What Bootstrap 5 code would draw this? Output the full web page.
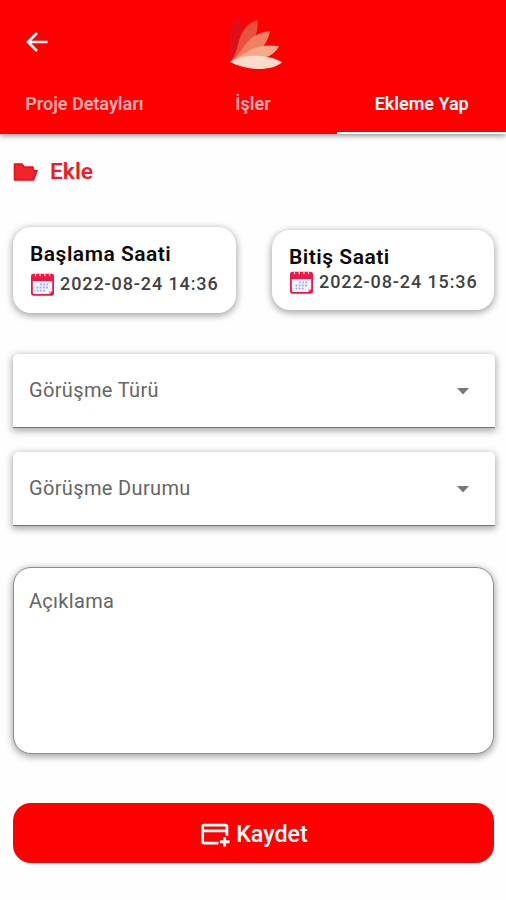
<!DOCTYPE html>
<html lang="tr">
<head>
<meta charset="utf-8">
<meta name="viewport" content="width=device-width, initial-scale=1">
<title>Ekleme Yap</title>
<link href="https://cdn.jsdelivr.net/npm/bootstrap@5.3.0/dist/css/bootstrap.min.css" rel="stylesheet">
<style>
body{font-family:Roboto,"Noto Sans",sans-serif;background:#fefefe;height:900px;overflow:hidden}
svg{display:block;flex:none}
.app-head{background:#f00;height:134px;box-shadow:0 2px 5px rgba(0,0,0,.4)}
.app-bar{height:76px}
.back-btn{margin:32px 0 0 26px}
.brand-logo{margin:16px 0 0 181px}
.app-tabs{height:58px}
.app-tabs .nav-link{color:#ffb0b0;font-weight:600;font-size:18px;line-height:24px;padding:16px 0 0;height:58px;border-bottom:2px solid transparent}
.app-tabs .nav-link.active{color:#fff;border-bottom-color:#fff}
.page-body{padding:24px 12px 0 13px}
.section-title{height:28px;color:#f21b22;font-size:22.8px;font-weight:600;line-height:28px}
.section-title span{margin-left:11px}
.times{margin-top:41px;height:86px}
.time-card{background:#fff;border-radius:18px;padding:14px 17px 0;width:223px;height:86px;box-shadow:0 2px 7px 1px rgba(0,0,0,.34)}
.time-card.end-card{width:222px;height:80px;padding-top:14px}
.time-name{color:#0a0a0a;font-size:21px;font-weight:600;line-height:26px;letter-spacing:.5px;white-space:nowrap}
.time-value{color:#414141;font-size:18px;font-weight:500;line-height:24px;letter-spacing:.9px;white-space:nowrap;gap:5px;margin:5px 0 0}
.end-card .time-value{margin-top:0}
.picks{margin-top:41px}
.pick{background:#fff;height:74px;width:482px;border:0;border-bottom:1.5px solid #757575;border-radius:5px 5px 0 0;padding:0 26px 1px 16px;box-shadow:0 2px 7px 1px rgba(0,0,0,.34);color:#656565;font-size:20px;letter-spacing:.35px}
.pick svg{margin-top:3px}
.note{background:#fff;height:187px;width:481px;border:1px solid #8c8c8c;border-radius:18px;padding:20px 15px;margin-top:41px;box-shadow:0 2px 7px 1px rgba(0,0,0,.34);color:#656565;font-size:20px;line-height:26px;letter-spacing:.3px}
.save-btn{background:#f00;color:#fff;height:60px;width:481px;margin-top:49px;border:0;border-radius:18px;font-size:23.300px;font-weight:500;line-height:28px;gap:6px;padding:2px 0 0 2px}
</style>
</head>
<body>
<svg width="0" height="0" class="position-absolute" aria-hidden="true">
  <symbol id="calendar" viewBox="0 0 24 24">
    <rect x=".5" y="1.7" width="23" height="22" rx="2.6" fill="#ee1745"/>
    <path d="M2.3 9h19.4v10l-3 3H3.6q-1.3 0-1.3-1.3z" fill="#f4f4fc"/>
    <path d="M18.5 22v-2.8h3.2z" fill="#ff9eb2"/>
    <path d="M5 .8v3.4M9.600 .8v3.400M14.400 .8v3.400M19 .8v3.400" stroke="#ffd0da" stroke-width="1.200"/>
    <path d="M9.500 12.300h9M6 15.500h12.500M6 18.600h9" stroke="#9db1f0" stroke-width="1.800" stroke-dasharray="1.900 1.300"/>
  </symbol>
</svg>
<header class="app-head position-relative">
  <div class="app-bar d-flex align-items-start">
    <a class="back-btn" href="#" aria-label="Geri">
      <svg width="22" height="20" viewBox="0 0 22 20" fill="none" stroke="#fff" stroke-width="2.700"><path d="M21.500 10H2.500M11 1 2 10l9 9"/></svg>
    </a>
    <svg class="brand-logo" width="54" height="54" viewBox="0 0 54 54">
      <path d="M2 45C-2 26 0 8 10 0c4 10 6 26-8 45z" fill="#e00e1a"/>
      <path d="M1 46C12 36 6 10 28.500 4 30 20 22 34 1 46z" fill="#e8513b"/>
      <path d="M1 46C16 36 15 18 41 15 38 33 24 42 1 46z" fill="#f08060"/>
      <path d="M1 46C20 36 24 27 50 30 44 43 26 46 1 46z" fill="#f6a98b"/>
      <path d="M1 46C14 37.500 40 38 53 46.500 42 55.500 18 55 1 46z" fill="#fbdccb"/>
    </svg>
  </div>
  <nav class="app-tabs nav row g-0 text-center">
    <a class="nav-link col" href="#">Proje Detayları</a>
    <a class="nav-link col" href="#">İşler</a>
    <a class="nav-link col active" href="#">Ekleme Yap</a>
  </nav>
</header>
<main class="page-body">
  <div class="section-title d-flex align-items-center">
    <svg width="26" height="20" viewBox="0 0 26 20"><path d="M1.500 18V2H9l2 3h9v3.500h4L20.500 18z" fill="#f2242b" stroke="#e0121a" stroke-width="1.600" stroke-linejoin="round"/></svg>
    <span>Ekle</span>
  </div>
  <div class="times d-flex justify-content-between align-items-center">
    <div class="time-card">
      <div class="time-name">Başlama Saati</div>
      <div class="time-value d-flex align-items-center"><svg width="25" height="24"><use href="#calendar"/></svg><span>2022-08-24 14:36</span></div>
    </div>
    <div class="time-card end-card">
      <div class="time-name">Bitiş Saati</div>
      <div class="time-value d-flex align-items-center"><svg width="25" height="24"><use href="#calendar"/></svg><span>2022-08-24 15:36</span></div>
    </div>
  </div>
  <div class="picks d-flex flex-column gap-4">
    <button class="pick d-flex align-items-center justify-content-between" type="button">Görüşme Türü
      <svg width="12" height="7" viewBox="0 0 12 7"><path d="M0 0h12L6 6.500z" fill="#777"/></svg></button>
    <button class="pick d-flex align-items-center justify-content-between" type="button">Görüşme Durumu
      <svg width="12" height="7" viewBox="0 0 12 7"><path d="M0 0h12L6 6.500z" fill="#777"/></svg></button>
  </div>
  <div class="note" role="textbox">Açıklama</div>
  <button class="save-btn d-flex align-items-center justify-content-center" type="button">
    <svg width="29" height="25" viewBox="0 0 30 25" fill="none" stroke="#fff" stroke-width="2.900"><path d="M18 21.500H3.300q-1.600 0-1.600-1.600V4.300q0-1.600 1.600-1.600h21.900q1.600 0 1.600 1.600V14M1.700 8.700h25M24.500 15v10M19.500 20h10"/></svg>
    <span>Kaydet</span>
  </button>
</main>
<script src="https://cdn.jsdelivr.net/npm/bootstrap@5.3.0/dist/js/bootstrap.bundle.min.js"></script>
</body>
</html>
